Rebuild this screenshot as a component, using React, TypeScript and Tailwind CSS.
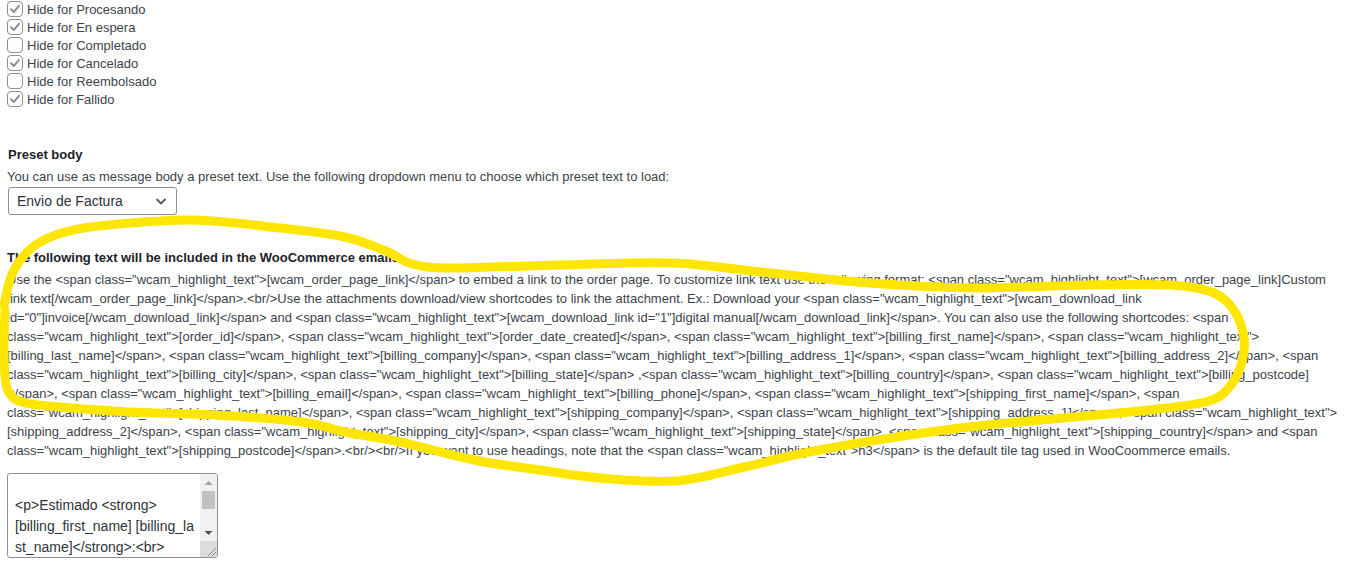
import React from "react";

const checks: [string, boolean][] = [
  ["Procesando", true],
  ["En espera", true],
  ["Completado", false],
  ["Cancelado", true],
  ["Reembolsado", false],
  ["Fallido", true],
];

const lines: string[] = [
  'Use the <span class="wcam_highlight_text">[wcam_order_page_link]</span> to embed a link to the order page. To customize link text use the following format: <span class="wcam_highlight_text">[wcam_order_page_link]Custom',
  'link text[/wcam_order_page_link]</span>.<br/>Use the attachments download/view shortcodes to link the attachment. Ex.: Download your <span class="wcam_highlight_text">[wcam_download_link',
  'id="0"]invoice[/wcam_download_link]</span> and <span class="wcam_highlight_text">[wcam_download_link id="1"]digital manual[/wcam_download_link]</span>. You can also use the following shortcodes: <span',
  'class="wcam_highlight_text">[order_id]</span>, <span class="wcam_highlight_text">[order_date_created]</span>, <span class="wcam_highlight_text">[billing_first_name]</span>, <span class="wcam_highlight_text">',
  '[billing_last_name]</span>, <span class="wcam_highlight_text">[billing_company]</span>, <span class="wcam_highlight_text">[billing_address_1]</span>, <span class="wcam_highlight_text">[billing_address_2]</span>, <span',
  'class="wcam_highlight_text">[billing_city]</span>, <span class="wcam_highlight_text">[billing_state]</span> ,<span class="wcam_highlight_text">[billing_country]</span>, <span class="wcam_highlight_text">[billing_postcode]',
  '</span>, <span class="wcam_highlight_text">[billing_email]</span>, <span class="wcam_highlight_text">[billing_phone]</span>, <span class="wcam_highlight_text">[shipping_first_name]</span>, <span',
  'class="wcam_highlight_text">[shipping_last_name]</span>, <span class="wcam_highlight_text">[shipping_company]</span>, <span class="wcam_highlight_text">[shipping_address_1]</span>, <span class="wcam_highlight_text">',
  '[shipping_address_2]</span>, <span class="wcam_highlight_text">[shipping_city]</span>, <span class="wcam_highlight_text">[shipping_state]</span> ,<span class="wcam_highlight_text">[shipping_country]</span> and <span',
  'class="wcam_highlight_text">[shipping_postcode]</span>.<br/><br/>If you want to use headings, note that the <span class="wcam_highlight_text">h3</span> is the default tile tag used in WooCoommerce emails.',
];

const loopPts: [number, number][] = [
  [4, 305], [13, 272], [34, 246], [65, 232], [108, 225], [194, 220], [280, 228], [345, 237],
  [388, 252], [412, 264], [453, 268], [560, 265], [672, 263], [761, 272], [869, 283], [977, 288],
  [1084, 285], [1170, 285], [1214, 293], [1235, 312], [1244, 338], [1242, 362], [1231, 385],
  [1209, 401], [1149, 410], [1063, 418], [977, 426], [890, 438], [804, 453], [740, 468], [675, 481],
  [600, 478], [540, 470], [474, 460], [400, 442], [345, 432], [302, 422], [215, 415], [129, 412],
  [60, 407], [22, 402], [7, 388], [4, 350], [5, 310],
];

function smoothPath(pts: [number, number][]): string {
  let d = `M${pts[0][0]},${pts[0][1]}`;
  for (let i = 0; i < pts.length - 1; i++) {
    const p0 = pts[i - 1] || pts[i];
    const p1 = pts[i];
    const p2 = pts[i + 1];
    const p3 = pts[i + 2] || p2;
    const c1x = p1[0] + (p2[0] - p0[0]) / 6;
    const c1y = p1[1] + (p2[1] - p0[1]) / 6;
    const c2x = p2[0] - (p3[0] - p1[0]) / 6;
    const c2y = p2[1] - (p3[1] - p1[1]) / 6;
    d += ` C${c1x.toFixed(1)},${c1y.toFixed(1)} ${c2x.toFixed(1)},${c2y.toFixed(1)} ${p2[0]},${p2[1]}`;
  }
  return d;
}

function CheckBox({ checked }: { checked: boolean }) {
  return (
    <span className="w-4 h-4 rounded-[4px] border border-[#8c8f94] bg-white flex items-center justify-center shrink-0">
      {checked && (
        <svg width="14" height="14" viewBox="0 0 14 14">
          <path d="M3 7.3 L5.8 10 L11 3.8" fill="none" stroke="#8c8f94" strokeWidth="2" strokeLinecap="round" strokeLinejoin="round" />
        </svg>
      )}
    </span>
  );
}

export default function App() {
  return (
    <div className="relative w-[1350px] h-[577px] overflow-hidden bg-white text-[13px] leading-[19px] text-[#3c434a] font-['Liberation_Sans',Arial,sans-serif]">
      <div className="flex flex-col">
        {checks.map(([label, c]) => (
          <div key={label} className="h-[18px] flex items-center pl-[7px] gap-[4px]">
            <CheckBox checked={c} />
            <span>Hide for {label}</span>
          </div>
        ))}
      </div>

      <div className="mt-[37px] pl-[8px] font-semibold text-[#1d2327]">Preset body</div>
      <div className="mt-[3px] pl-[7px]">
        You can use as message body a preset text. Use the following dropdown menu to choose which preset text to load:
      </div>
      <div className="mt-[1px] ml-[8px] w-[169px] h-[28px] rounded-[3px] border border-[#8c8f94] flex items-center justify-between pl-[8px] pr-[8px] text-[14px] text-[#2c3338]">
        <span>Envio de Factura</span>
        <svg width="14" height="14" viewBox="0 0 14 14">
          <path d="M2.5 5 L7 9.5 L11.5 5" fill="none" stroke="#50575e" strokeWidth="1.8" />
        </svg>
      </div>

      <div className="mt-[33px] pl-[7px] font-semibold text-[#1d2327]">
        The following text will be included in the WooCommerce emails
      </div>
      <div className="mt-[3px] pl-[7px] flex flex-col">
        {lines.map((l, i) => (
          <div key={i} className="whitespace-pre">{l}</div>
        ))}
      </div>

      <div className="mt-[13px] ml-[7px] w-[211px] h-[85px] rounded-[3px] border border-[#8c8f94] flex overflow-hidden bg-white">
        <div className="flex-1 pl-[7px] pt-[21px] text-[14px] leading-[21px] text-[#2c3338]">
          <div>&lt;p&gt;Estimado &lt;strong&gt;</div>
          <div>[billing_first_name] [billing_la</div>
          <div>st_name]&lt;/strong&gt;:&lt;br&gt;</div>
        </div>
        <div className="w-[17px] bg-[#f1f1f1] flex flex-col items-center">
          <div className="h-[17px] flex items-center justify-center">
            <svg width="9" height="6" viewBox="0 0 9 6"><path d="M0.5 5 L4.5 1 L8.5 5 Z" fill="#a3a3a3" /></svg>
          </div>
          <div className="w-[13px] h-[18px] bg-[#c1c1c1]" />
          <div className="flex-1" />
          <div className="h-[17px] flex items-center justify-center">
            <svg width="9" height="6" viewBox="0 0 9 6"><path d="M0.5 1 L4.5 5 L8.5 1 Z" fill="#505050" /></svg>
          </div>
          <div className="w-[17px] h-[16px] bg-[#dcdcdc] flex items-end justify-end">
            <svg width="12" height="12" viewBox="0 0 12 12">
              <path d="M11 3 L3 11 M11 7 L7 11" stroke="#8a8a8a" strokeWidth="1" />
            </svg>
          </div>
        </div>
      </div>

      <svg className="absolute inset-0 pointer-events-none" width="1350" height="577" viewBox="0 0 1350 577">
        <path d={smoothPath(loopPts)} fill="none" stroke="#ffe600" strokeWidth="9" strokeLinecap="round" strokeLinejoin="round" />
      </svg>
    </div>
  );
}
